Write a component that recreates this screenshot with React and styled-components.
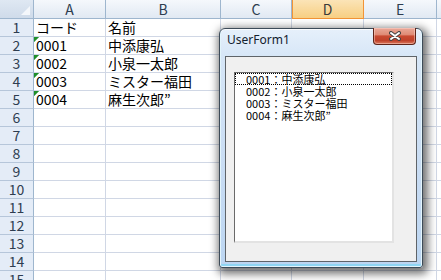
import styled, { createGlobalStyle } from "styled-components"

const GlobalStyle = createGlobalStyle`
  html, body {
    margin: 0;
    padding: 0;
    overflow: hidden;
    background: #fff;
  }
  #root {
    position: relative;
    width: 441px;
    height: 280px;
    overflow: hidden;
  }
`

const COLS = ["A", "B", "C", "D", "E", "F"]

const rows = [
  ["コード", "名前"],
  ["0001", "中添康弘"],
  ["0002", "小泉一太郎"],
  ["0003", "ミスター福田"],
  ["0004", "麻生次郎”"],
]

const Sheet = styled.div`
  display: grid;
  grid-template-columns: 34px 72px 115px 71px 72px 73px 80px;
  grid-template-rows: 19px repeat(15, 18px);
  font-family: "Noto Sans CJK JP", sans-serif;
  font-size: 14px;
  color: #000;
`

const Corner = styled.div`
  box-sizing: border-box;
  display: flex;
  align-items: flex-end;
  justify-content: flex-end;
  padding: 0 3px 3px 0;
  background: linear-gradient(#dfe8f3, #cfdbea);
  border-right: 1px solid #9eb6ce;
  border-bottom: 1px solid #9eb6ce;
`

const ColHead = styled.div`
  box-sizing: border-box;
  display: flex;
  align-items: center;
  justify-content: center;
  line-height: 16px;
  color: ${(p) => (p.$active ? "#3a3a3a" : "#2e3d50")};
  background: ${(p) =>
    p.$active
      ? "linear-gradient(#fbe4b7, #f7cf83)"
      : "linear-gradient(#f5f8fc, #e1e9f3)"};
  border-right: 1px solid ${(p) => (p.$active ? "#f29436" : "#9eb6ce")};
  border-bottom: 1px solid ${(p) => (p.$active ? "#f29436" : "#9eb6ce")};
  box-shadow: ${(p) => (p.$active ? "inset 1px 0 0 #f29436" : "none")};
`

const RowHead = styled.div`
  box-sizing: border-box;
  display: flex;
  justify-content: center;
  line-height: 16px;
  color: #2e3d50;
  background: #e4ecf7;
  border-right: 1px solid #9eb6ce;
  border-bottom: 1px solid #b6c6da;
`

const Cell = styled.div`
  box-sizing: border-box;
  padding-left: 2px;
  line-height: 16px;
  white-space: nowrap;
  border-right: 1px solid #d0d7e5;
  border-bottom: 1px solid #d0d7e5;
  background: ${(p) =>
    p.$flag
      ? "linear-gradient(135deg, #1f8f2a 0 3.5px, transparent 3.6px) no-repeat 0 0 / 6px 6px"
      : "#fff"};
`

const Window = styled.div`
  position: absolute;
  left: 219px;
  top: 28px;
  width: 204px;
  height: 240px;
  box-sizing: border-box;
  display: flex;
  flex-direction: column;
  border: 1px solid #3d4b58;
  border-radius: 6px 6px 3px 3px;
  background: linear-gradient(#e6f0fb 0%, #d6e6f7 12%, #c8dcf3 60%, #bcd6f2 100%);
  box-shadow: inset 0 0 0 1px rgba(255, 255, 255, 0.75),
    inset 0 -2px 0 1px #8fd6f3, 2px 3px 9px 3px rgba(0, 0, 0, 0.55);
`

const TitleBar = styled.div`
  height: 27px;
  flex: none;
  display: flex;
  justify-content: space-between;
  align-items: flex-start;
  padding-left: 7px;
`

const Title = styled.span`
  padding-top: 3px;
  font-family: "Noto Sans", "Segoe UI", sans-serif;
  font-size: 12px;
  line-height: 16px;
  color: #13202e;
`

const CloseButton = styled.div`
  box-sizing: border-box;
  width: 43px;
  height: 17px;
  margin: -1px 6px 0 0;
  display: flex;
  align-items: center;
  justify-content: center;
  border: 1px solid #5e2419;
  border-top: none;
  border-radius: 0 0 4px 4px;
  background: linear-gradient(
    #eaa999 0%,
    #df8a75 42%,
    #c94a32 50%,
    #bf412a 78%,
    #dc7a5e 100%
  );
  box-shadow: inset 0 0 0 1px rgba(255, 220, 210, 0.45);
`

const Client = styled.div`
  flex: 1;
  margin: 0 5px 5px 5px;
  box-sizing: border-box;
  border: 1px solid #5f6469;
  background: #f0f0f0;
  padding: 15px 22px 18px 8px;
  display: flex;
`

const ListBox = styled.div`
  flex: 1;
  box-sizing: border-box;
  background: #fff;
  border-style: solid;
  border-width: 1px 2px 2px 1px;
  border-color: #6a6a6a #e3e3e3 #e3e3e3 #6a6a6a;
  font-family: "Noto Sans CJK JP", sans-serif;
  font-size: 11px;
  color: #000;
`

const Item = styled.div`
  box-sizing: border-box;
  height: 12px;
  line-height: 12px;
  padding-left: 11px;
  white-space: nowrap;
  outline: ${(p) => (p.$focus ? "1px dotted #000" : "none")};
  outline-offset: -1px;
`

function CloseIcon() {
  return (
    <svg width="12" height="10" viewBox="0 0 12 10">
      <path d="M2 2 L10 8 M10 2 L2 8" stroke="#444" strokeWidth="4" strokeLinecap="round" />
      <path d="M2 2 L10 8 M10 2 L2 8" stroke="#fff" strokeWidth="2" strokeLinecap="round" />
    </svg>
  )
}

function CornerMark() {
  return (
    <svg width="9" height="9" viewBox="0 0 9 9">
      <path d="M9 0 L9 9 L0 9 Z" fill="#f4f7fb" />
    </svg>
  )
}

export default function App() {
  const bodyRows = Array.from({ length: 15 }, (_, i) => i + 1)

  return (
    <>
      <GlobalStyle />
      <Sheet>
        <Corner>
          <CornerMark />
        </Corner>
        {COLS.map((c) => (
          <ColHead key={c} $active={c === "D"}>
            {c}
          </ColHead>
        ))}
        {bodyRows.map((r) => {
          const data = rows[r - 1] || []
          return [
            <RowHead key={"h" + r}>{r}</RowHead>,
            ...COLS.map((c, ci) => (
              <Cell key={c + r} $flag={ci === 0 && r >= 2 && r <= 5}>
                {data[ci] || ""}
              </Cell>
            )),
          ]
        })}
      </Sheet>

      <Window>
        <TitleBar>
          <Title>UserForm1</Title>
          <CloseButton>
            <CloseIcon />
          </CloseButton>
        </TitleBar>
        <Client>
          <ListBox>
            {rows.slice(1).map(([code, name], i) => (
              <Item key={code} $focus={i === 0}>
                {code}：{name}
              </Item>
            ))}
          </ListBox>
        </Client>
      </Window>
    </>
  )
}
